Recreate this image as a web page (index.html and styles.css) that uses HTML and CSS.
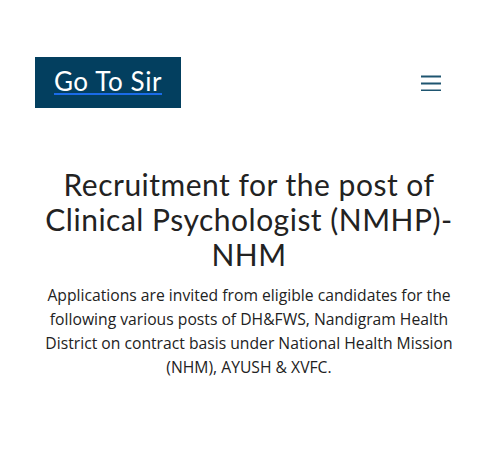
FILE: index.html
```html
<!DOCTYPE html>
<html>
<head>
<meta charset="utf-8">
<link rel="stylesheet" href="styles.css">
</head>
<body>
<header class="header">
  <a class="logo" href="#"><span class="logo-text">Go To Sir</span></a>
  <button class="menu" aria-label="Menu">
    <svg width="20" height="16" viewBox="0 0 20 16"><path d="M0 1.5H20M0 8.5H20M0 15.5H20" stroke="#1e5570" stroke-width="2"/></svg>
  </button>
</header>
<main class="content">
  <h1 class="title">Recruitment for the post of Clinical Psychologist (NMHP)-NHM</h1>
  <p class="desc">Applications are invited from eligible candidates for the following various posts of DH&amp;FWS, Nandigram Health District on contract basis under National Health Mission (NHM), AYUSH &amp; XVFC.</p>
</main>
</body>
</html>
```
FILE: styles.css
```css
html, body { margin: 0; padding: 0; background: #fff; }
body { font-family: "Open Sans", "Noto Sans", sans-serif; color: #222; }
.header {
  display: flex;
  align-items: center;
  justify-content: space-between;
  padding: 57px 57px 0 35px;
}
.logo {
  display: flex;
  align-items: center;
  justify-content: center;
  width: 146px;
  height: 51px;
  background: #033f5f;
  text-decoration: none;
}
.logo-text {
  color: #fff;
  font-family: "Lato", "Noto Sans", sans-serif;
  font-size: 26px;
  letter-spacing: 0.6px;
  line-height: 0.9;
  border-bottom: 2px solid #1a6be8;
  padding-bottom: 0;
  margin-top: 0;
}
.menu {
  background: none;
  border: 0;
  padding: 0;
  width: 20px;
  height: 16px;
  display: block;
}
.menu svg { display: block; }
.content {
  padding: 59px 40px 0;
  text-align: center;
}
.title {
  margin: 0;
  font-family: "Lato", "Noto Sans", sans-serif;
  font-weight: 400;
  font-size: 30px;
  letter-spacing: 0.5px;
  line-height: 35px;
  color: #222;
}
.desc {
  margin: 11px 0 0;
  font-size: 15.7px;
  line-height: 24px;
  color: #222;
}
```
